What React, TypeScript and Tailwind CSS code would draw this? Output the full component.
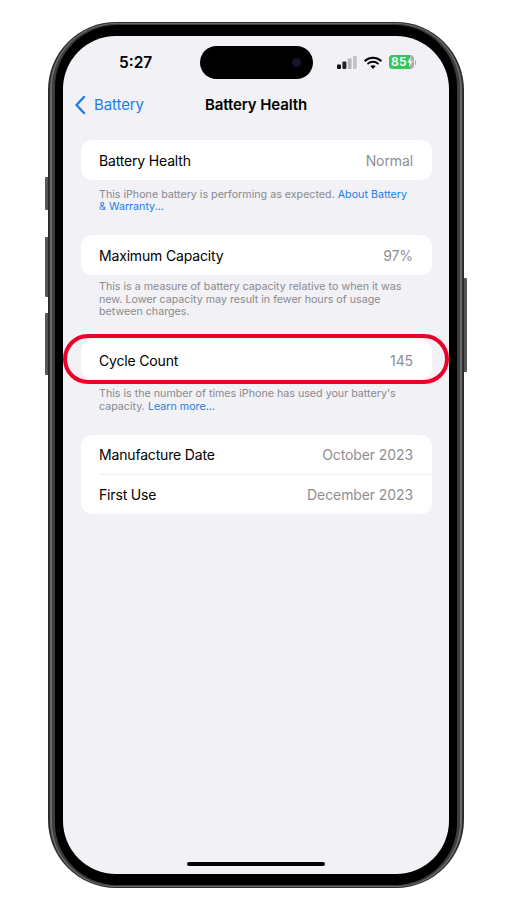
const font = { fontFamily: 'Inter, "Liberation Sans", sans-serif' };

function Row({ label, value }: { label: string; value: string }) {
  return (
    <div className="flex h-[39.5px] items-center justify-between pl-[18px] pr-[19px] pt-px">
      <span className="text-[14px] tracking-[-0.17px] text-black">{label}</span>
      <span className="text-[14px] tracking-[-0.1px] text-[#8e8e92]">{value}</span>
    </div>
  );
}

function Caption({ children, className = "" }: { children: React.ReactNode; className?: string }) {
  return (
    <p className={`px-[18px] text-[10.7px] leading-[12.6px] text-[#8a8a8f] ${className}`}>{children}</p>
  );
}

function Chevron() {
  return (
    <svg width="12" height="20" viewBox="0 0 12 20" fill="none">
      <path d="M10 2 L2.5 10 L10 18" stroke="#1f7de6" strokeWidth="2.4" strokeLinecap="round" strokeLinejoin="round" />
    </svg>
  );
}

function Signal() {
  return (
    <svg width="20" height="13" viewBox="0 0 20 13">
      <rect x="0" y="8.5" width="4" height="4.5" rx="1" fill="#111" />
      <rect x="5.4" y="5.5" width="4" height="7.5" rx="1" fill="#222" />
      <rect x="10.8" y="2.5" width="3.8" height="10.5" rx="1" fill="#b5b5b8" />
      <rect x="16" y="0" width="3.8" height="13" rx="1" fill="#c4c4c7" />
    </svg>
  );
}

function Wifi() {
  return (
    <svg width="18" height="13" viewBox="0 0 18 13" fill="none">
      <path d="M1.3 4.6 C5.6 0.7 12.4 0.7 16.7 4.6" stroke="#000" strokeWidth="2.1" strokeLinecap="round" />
      <path d="M4.2 7.5 C6.9 5.2 11.1 5.2 13.8 7.5" stroke="#000" strokeWidth="2.1" strokeLinecap="round" />
      <path d="M9 13 L6.4 10.1 C7.9 9 10.1 9 11.6 10.1 Z" fill="#000" />
    </svg>
  );
}

function BatteryIcon() {
  return (
    <div className="flex items-center">
      <div className="relative flex h-[14px] w-[25px] items-center overflow-hidden rounded-[4px] bg-[#a9b0ab]">
        <div className="flex h-full w-[21px] items-center bg-[#34c759] pl-[2.5px]">
          <span className="text-[12px] font-semibold leading-none tracking-[0.3px] text-white">85</span>
        </div>
        <svg className="absolute right-[1px] top-[2px]" width="6" height="10" viewBox="0 0 6 10">
          <path d="M3.6 0 L0.4 5.6 H2.6 L2 10 L5.6 4 H3.3 Z" fill="#fff" />
        </svg>
      </div>
      <div className="ml-[1px] h-[5px] w-[1.5px] rounded-r-sm bg-[#a9b0ab]" />
    </div>
  );
}

export default function App() {
  return (
    <div className="h-[910px] w-[512px] overflow-hidden bg-white pl-[48px] pt-[22px]" style={font}>
      <div className="relative h-[866px] w-[416px]">
        {/* side buttons */}
        <div className="absolute left-[-3px] top-[155px] h-[33px] w-[3px] rounded-l-[1px] bg-[#55565a]" />
        <div className="absolute left-[-3px] top-[215px] h-[60px] w-[3px] rounded-l-[1px] bg-[#55565a]" />
        <div className="absolute left-[-3px] top-[291px] h-[62px] w-[3px] rounded-l-[1px] bg-[#55565a]" />
        <div className="absolute right-[-3px] top-[256px] h-[94px] w-[3px] rounded-r-[1px] bg-[#55565a]" />

        {/* frame */}
        <div className="h-full w-full rounded-[68px] bg-[#2c2c2e] px-[2px] py-px">
          <div className="h-full w-full rounded-[66px] bg-[#6a6a6c] px-[2px] py-px">
            <div className="h-full w-full rounded-[64px] bg-[#3d3d3f] px-[3px] py-px">
              <div className="h-full w-full rounded-[62px] bg-black px-[8px] py-[11px]">
                {/* screen */}
                <div className="relative flex h-full w-full flex-col overflow-hidden rounded-[53px] bg-[#f1f1f6]">
                  {/* status bar */}
                  <div className="relative flex h-[54px] shrink-0 items-start">
                    <span className="ml-[56px] mt-[17px] text-[15.5px] font-semibold leading-[20px] text-black">5:27</span>
                    <div className="absolute left-[137px] top-[10px] flex h-[33px] w-[113px] items-center justify-end rounded-full bg-black pr-[12px]">
                      <div className="h-[9px] w-[9px] rounded-full bg-[#15152e]" />
                    </div>
                    <div className="ml-auto mr-[33px] mt-[19px] flex items-center gap-[7px]">
                      <Signal />
                      <Wifi />
                      <BatteryIcon />
                    </div>
                  </div>

                  {/* nav */}
                  <div className="relative flex h-[30px] shrink-0 items-center pl-[11px]">
                    <Chevron />
                    <span className="ml-[8px] text-[15px] tracking-[-0.1px] text-[#1f7de6]">Battery</span>
                    <span className="absolute inset-x-0 text-center text-[15px] font-semibold tracking-[-0.1px] text-black">
                      Battery Health
                    </span>
                  </div>

                  {/* content */}
                  <div className="flex flex-col pl-[18px] pr-[17px] pt-[20px]">
                    <div className="rounded-[11px] bg-white">
                      <Row label="Battery Health" value="Normal" />
                    </div>
                    <Caption className="mb-[21.5px] mt-[9px]">
                      This iPhone battery is performing as expected.{" "}
                      <span className="text-[#1f7de6]">About Battery &amp; Warranty...</span>
                    </Caption>

                    <div className="rounded-[11px] bg-white">
                      <Row label="Maximum Capacity" value="97%" />
                    </div>
                    <Caption className="mb-[21px] mt-[6.5px]">
                      This is a measure of battery capacity relative to when it was new. Lower capacity may result in fewer hours of usage between charges.
                    </Caption>

                    <div className="relative rounded-[11px] bg-white">
                      <Row label="Cycle Count" value="145" />
                      <div className="absolute -bottom-[4.5px] -left-[18px] -right-[17px] -top-[6px] rounded-full border-[4px] border-[#ea0029]" />
                    </div>
                    <Caption className="mb-[21.5px] mt-[8.5px]">
                      This is the number of times iPhone has used your battery's capacity.{" "}
                      <span className="text-[#1f7de6]">Learn more...</span>
                    </Caption>

                    <div className="relative rounded-[11px] bg-white">
                      <Row label="Manufacture Date" value="October 2023" />
                      <Row label="First Use" value="December 2023" />
                      <div className="absolute left-[18px] right-0 top-[39px] h-px bg-[#eeeef0]" />
                    </div>
                  </div>

                  {/* home indicator */}
                  <div className="mb-[8px] mt-auto flex justify-center">
                    <div className="h-[4px] w-[138px] rounded-full bg-black" />
                  </div>
                </div>
              </div>
            </div>
          </div>
        </div>
      </div>
    </div>
  );
}
